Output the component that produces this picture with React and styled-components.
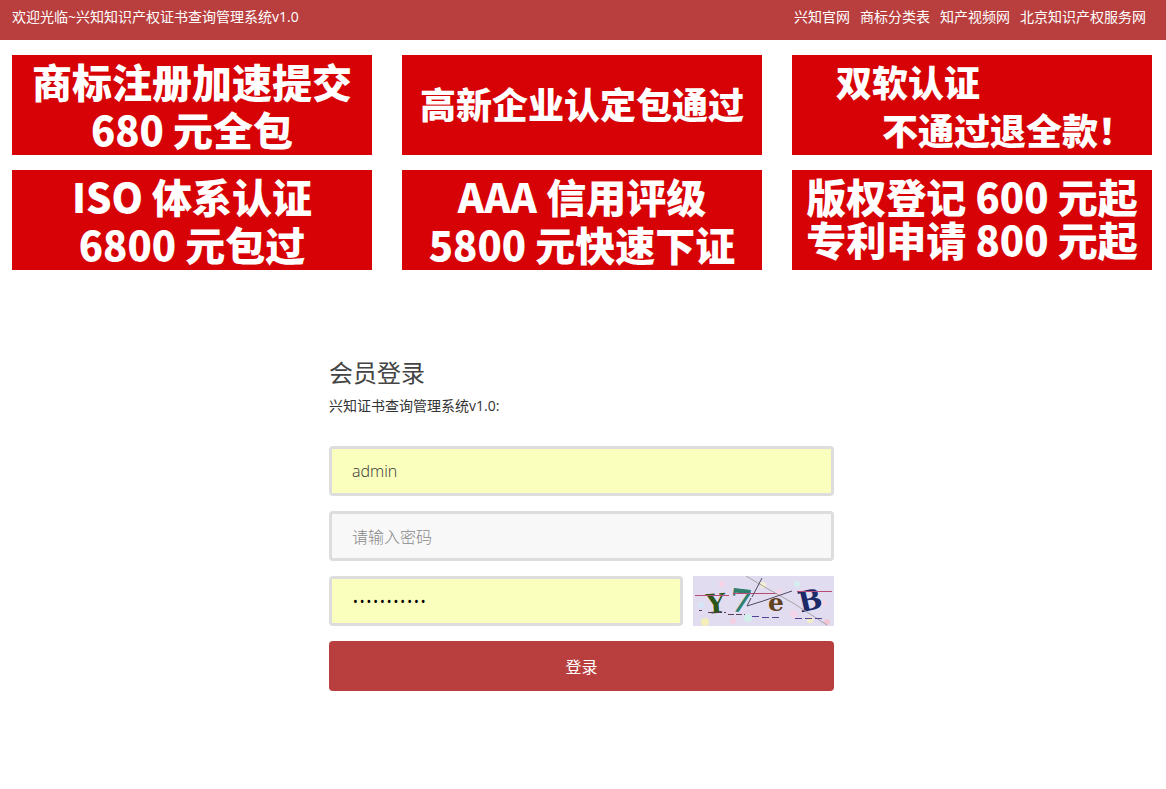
import React from "react";
import styled, { createGlobalStyle } from "styled-components";

const GlobalStyle = createGlobalStyle`
  *, *::before, *::after { box-sizing: border-box; }
  body {
    margin: 0;
    background: #fff;
    color: #333;
    font-family: "Open Sans", "Noto Sans CJK SC", sans-serif;
    font-size: 14px;
    line-height: 20px;
  }
`;

const TopBar = styled.header`
  display: flex;
  justify-content: space-between;
  height: 40px;
  padding: 7px 20px 0 12px;
  background: #b93f3f;
  color: #fff;
`;

const Links = styled.nav`
  display: flex;
  gap: 10px;
`;

const TopLink = styled.a`
  color: inherit;
  text-decoration: none;
`;

const Banners = styled.section`
  display: grid;
  grid-template-columns: repeat(3, 1fr);
  gap: 15px 30px;
  padding: 15px 14px 0 12px;
`;

const Banner = styled.a`
  display: flex;
  flex-direction: column;
  align-items: center;
  justify-content: center;
  height: 100px;
  padding-bottom: ${(p) => (p.$raised ? 4 : 0)}px;
  background: #d70205;
  color: #fff;
  font-family: "Noto Sans CJK SC", sans-serif;
  font-size: ${(p) => (p.$small ? 36 : 40)}px;
  font-weight: 900;
  line-height: ${(p) => (p.$tight ? 43 : 48)}px;
  text-decoration: none;
  white-space: nowrap;
`;

const BannerLine = styled.span`
  align-self: ${(p) => p.$align || "center"};
  padding: ${(p) => (p.$align ? "0 18px 0 44px" : "0")};
`;

const LoginArea = styled.main`
  display: flex;
  justify-content: center;
  padding: 88px 3px 40px 0;
`;

const LoginForm = styled.form`
  display: flex;
  flex-direction: column;
  gap: 15px;
  width: 100%;
  max-width: 505px;
`;

const Heading = styled.div`
  padding-bottom: 15px;
`;

const Title = styled.h1`
  margin: 0;
  color: #444;
  font-size: 24px;
  font-weight: 400;
  line-height: 30px;
`;

const Subtitle = styled.p`
  margin: 8px 0 0;
`;

const Field = styled.input`
  flex: 1;
  width: 100%;
  min-width: 0;
  min-height: 50px;
  padding: 0 20px;
  border: 3px solid #ddd;
  border-radius: 4px;
  outline: 0;
  background: ${(p) => (p.$filled ? "#faffbd" : "#f8f8f8")};
  color: ${(p) => (p.type === "password" ? "#000" : "#333")};
  font-family: inherit;
  font-size: ${(p) => (p.type === "password" ? 18 : 16)}px;
  font-weight: 300;

  &::placeholder {
    color: #888;
    font-size: 16px;
    opacity: 1;
  }
`;

const CodeRow = styled.div`
  display: flex;
  gap: 10px;
`;

const CaptchaButton = styled.button`
  flex: none;
  width: 141px;
  height: 50px;
  padding: 0;
  border: 0;
  background: #e2dcf0;
  cursor: pointer;

  svg { display: block; }
`;

const Submit = styled.button`
  height: 50px;
  border: 0;
  border-radius: 4px;
  background: #b93f3f;
  color: #fff;
  font-family: inherit;
  font-size: 16px;
  font-weight: 400;
  cursor: pointer;
`;

const links = ["兴知官网", "商标分类表", "知产视频网", "北京知识产权服务网"];

const banners = [
  { lines: ["商标注册加速提交", "680 元全包"] },
  { lines: ["高新企业认定包通过"], small: true, raised: true },
  { lines: ["双软认证", "不通过退全款！"], small: true, split: true },
  { lines: ["ISO 体系认证", "6800 元包过"] },
  { lines: ["AAA 信用评级", "5800 元快速下证"] },
  { lines: ["版权登记 600 元起", "专利申请 800 元起"], tight: true, raised: true },
];

const specks = [
  [12, 46, 4, "#f3eeb8"], [29, 8, 3, "#f6d5e6"], [40, 45, 3, "#f5cfe2"],
  [55, 42, 4, "#d2f0ea"], [70, 9, 3, "#f4efcf"], [86, 16, 3, "#f4d4ea"],
  [8, 29, 3, "#d6e6f8"], [101, 38, 4, "#f3d6e8"], [117, 44, 3, "#f3eec2"],
  [130, 27, 3, "#f6d8e4"], [104, 8, 3, "#d5eef0"], [134, 46, 3, "#efc5d4"],
];

function Captcha() {
  return (
    <svg width="141" height="50" viewBox="0 0 141 50" aria-hidden="true">
      {specks.map(([x, y, r, fill]) => (
        <circle key={`${x}-${y}`} cx={x} cy={y} r={r} fill={fill} />
      ))}
      <g fontFamily="DejaVu Serif, serif" fontWeight="700">
        <text x="13" y="37" fontSize="27" fill="#2c5618" transform="rotate(-4 24 28)">Y</text>
        <text x="37" y="36" fontSize="32" fill="#2f7f6c" transform="rotate(7 47 24)">7</text>
        <text x="75" y="35" fontSize="25" fill="#624120">e</text>
        <text x="105" y="34" fontSize="28" fill="#1c2b68" transform="rotate(-13 117 23)">B</text>
      </g>
      <g fill="none" strokeWidth="1">
        <path d="M2 19.500H36M40 17.500H84M104 15.500H139" stroke="#b84c78" />
        <path d="M53 0L75 13L100 27L134 49" stroke="#aaa0a5" />
        <path d="M69 2L59 21M58 22L54 30L70 25L99 15" stroke="#4c4b60" />
        <path d="M6 34.500H9M15 36.500H33M35 38.500H52" stroke="#603b58" strokeDasharray="6 2" />
        <path d="M59 40.500H67M69 41.500H88M102 42.500H131" stroke="#514596" strokeDasharray="7 3" />
      </g>
    </svg>
  );
}

export default function App() {
  return (
    <>
      <GlobalStyle />
      <TopBar>
        <span>欢迎光临~兴知知识产权证书查询管理系统v1.0</span>
        <Links>
          {links.map((label) => (
            <TopLink key={label} href="#">{label}</TopLink>
          ))}
        </Links>
      </TopBar>
      <Banners>
        {banners.map(({ lines, small, tight, raised, split }) => (
          <Banner key={lines[0]} href="#" $small={small} $tight={tight} $raised={raised}>
            {lines.map((line, i) => (
              <BannerLine
                key={line}
                $align={split ? (i === 0 ? "flex-start" : "flex-end") : undefined}
              >
                {line}
              </BannerLine>
            ))}
          </Banner>
        ))}
      </Banners>
      <LoginArea>
        <LoginForm onSubmit={(e) => e.preventDefault()}>
          <Heading>
            <Title>会员登录</Title>
            <Subtitle>兴知证书查询管理系统v1.0:</Subtitle>
          </Heading>
          <Field type="text" aria-label="用户名" defaultValue="admin" $filled />
          <Field type="password" aria-label="密码" placeholder="请输入密码" />
          <CodeRow>
            <Field type="password" aria-label="验证码" defaultValue="12345678901" $filled />
            <CaptchaButton type="button" aria-label="刷新验证码">
              <Captcha />
            </CaptchaButton>
          </CodeRow>
          <Submit type="submit">登录</Submit>
        </LoginForm>
      </LoginArea>
    </>
  );
}
